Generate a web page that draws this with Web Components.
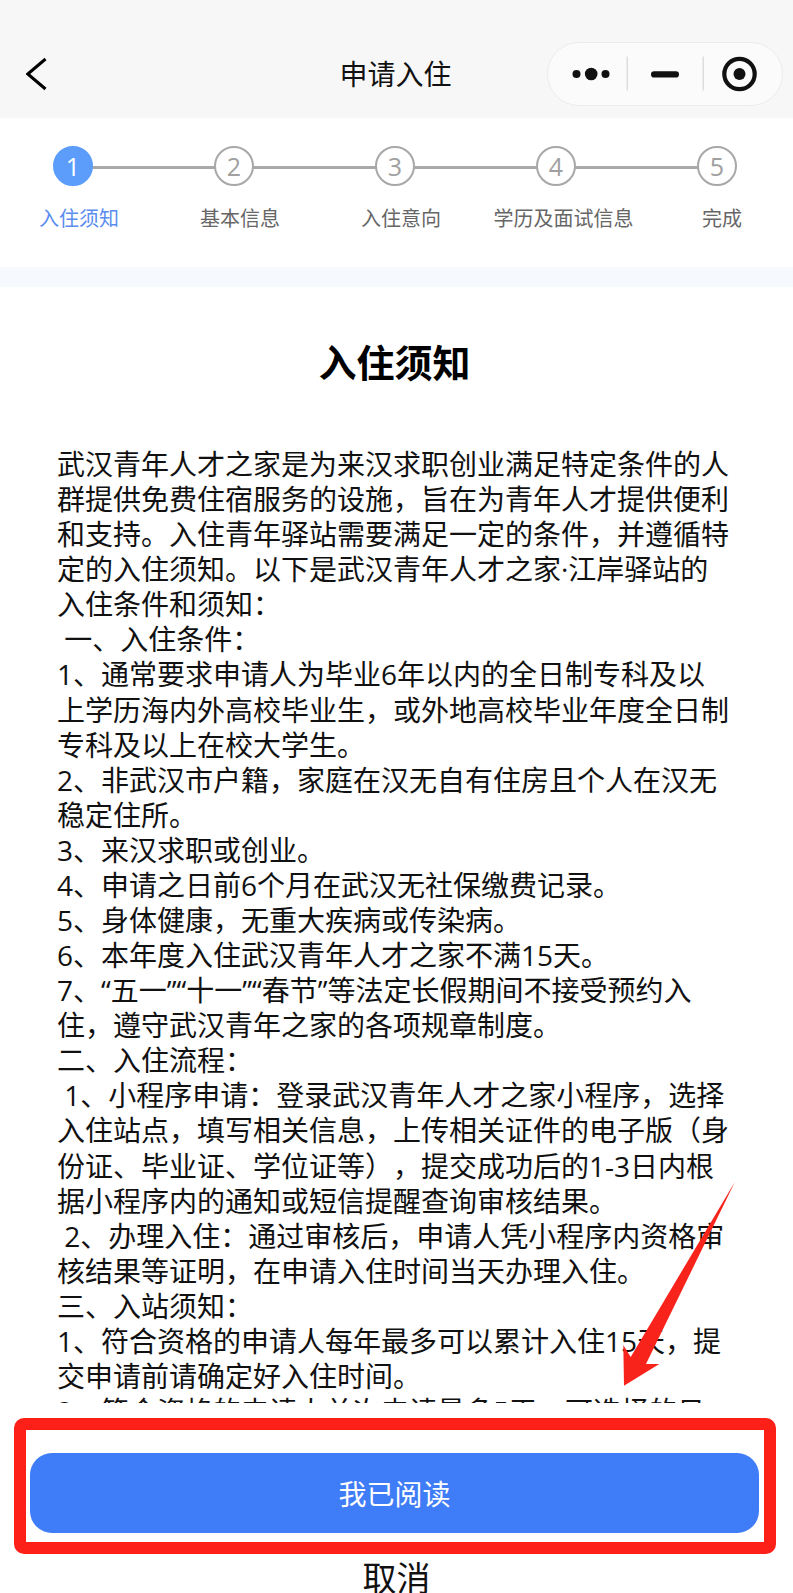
<!DOCTYPE html>
<html><head><meta charset="utf-8"><style>
html,body{margin:0;padding:0;background:#fff;}
body{width:793px;height:1593px;overflow:hidden;font-family:"Open Sans","Noto Sans CJK SC",sans-serif;}
</style></head><body>
<apply-page></apply-page>
<script>
function def(name,html){customElements.define(name,class extends HTMLElement{constructor(){super();this.attachShadow({mode:'open'}).innerHTML=html;}});}
def('nav-bar',`<style>
:host{display:flex;align-items:center;justify-content:center;position:relative;height:118px;background:#f7f7f7;box-sizing:border-box;padding-top:30px;}
.t{font-size:28px;color:#111;line-height:40px;margin-left:-2px}
.b{position:absolute;left:26px;top:57px;width:22px;height:34px}
.c{position:absolute;left:547px;top:42px;width:236px;height:64px;box-sizing:border-box;border:1.5px solid #ececec;border-radius:32px;background:#fbfbfb}
.c svg{display:block}
</style><svg class="b" viewBox="0 0 22 34"><path d="M19.5 2 L1.8 17 L19.5 32" fill="none" stroke="#000" stroke-width="3"/></svg>
<span class="t">申请入住</span>
<div class="c"><svg width="233" height="61" viewBox="0 0 233 61">
<circle cx="28.5" cy="31" r="4" fill="#111"/><circle cx="43.2" cy="31" r="6.3" fill="#111"/><circle cx="57.5" cy="31" r="4" fill="#111"/>
<rect x="78.5" y="13.5" width="1.5" height="34" fill="#ddd"/>
<rect x="103" y="28.3" width="28" height="6.2" rx="3.1" fill="#111"/>
<rect x="154.5" y="13.5" width="1.5" height="34" fill="#ddd"/>
<circle cx="191.5" cy="31" r="15.2" fill="none" stroke="#111" stroke-width="4.2"/><circle cx="191.5" cy="31" r="6" fill="#111"/>
</svg></div>`);
def('step-item',`<style>
:host{display:block;flex:none;width:40px;position:relative;height:40px;z-index:1}
.n{box-sizing:border-box;width:40px;height:40px;border-radius:50%;border:2px solid #a8a8a8;background:#fff;color:#a0a0a0;font-size:25px;display:flex;align-items:center;justify-content:center;line-height:1}
:host([active]) .n{background:#5c9dfb;border-color:#5c9dfb;color:#fff}
.l{position:absolute;top:59px;left:calc(50% + var(--dx,0px));transform:translateX(-50%);white-space:nowrap;font-size:20px;line-height:28px;color:#666}
:host([active]) .l{color:#5b8def}
</style><div class="n"><slot></slot></div><div class="l"><slot name="l"></slot></div>`);
def('step-bar',`<style>
:host{display:flex;justify-content:space-between;position:relative;height:149px;box-sizing:border-box;padding:28px 56px 0 53px;background:#fff}
.line{position:absolute;left:73px;right:76px;top:47.5px;height:3px;background:#a9a9a9}
</style><div class="line"></div><slot></slot>`);
def('notice-body',`<style>
:host{display:block;height:1136px;overflow:hidden;box-sizing:border-box;border-top:20px solid #f6f9fd;background:#fff}
h1{margin:0;padding-top:48px;text-align:center;font-size:38px;line-height:54px;font-weight:700;color:#000;margin-left:-4px}
.p{margin:58px 0 0;padding:0 62px 0 57px;font-size:28px;line-height:35.08px;color:#111;text-spacing-trim:space-all}
</style><h1>入住须知</h1><div class="p"><slot></slot></div>`);
def('action-box',`<style>
:host{display:block;position:relative;margin:15px 17px 0 14px;height:136px;box-sizing:border-box;border:12px solid #fd2018;border-radius:10px;background:#fff;padding:23px 5px 0 4px}
.b{height:80px;border-radius:22px;background:#3f7cf7;color:#fff;font-size:28px;display:flex;align-items:center;justify-content:center}
</style><div class="b"><slot></slot></div>`);
def('red-arrow',`<style>
:host{position:absolute;left:620px;top:1178px;width:120px;height:216px;display:block}
svg{display:block}
</style><svg width="120" height="216" viewBox="0 0 120 216"><path d="M115 3.7 L26 186 L39.3 186 L4 207.7 L3.3 167 L10.7 179 Z" fill="#f8241c"/></svg>`);
def('cancel-link',`<style>
:host{display:block;text-align:center;font-size:34px;line-height:46px;color:#111;padding-top:1px}
</style><slot></slot>`);
def('apply-page',`<style>
:host{display:block;position:relative;width:793px;height:1593px;overflow:hidden;background:#fff}
</style>
<nav-bar></nav-bar>
<step-bar>
<step-item active style="--dx:6px">1<span slot="l">入住须知</span></step-item>
<step-item style="--dx:6px">2<span slot="l">基本信息</span></step-item>
<step-item style="--dx:6px">3<span slot="l">入住意向</span></step-item>
<step-item style="--dx:7.5px">4<span slot="l">学历及面试信息</span></step-item>
<step-item style="--dx:5px">5<span slot="l">完成</span></step-item>
</step-bar>
<notice-body>武汉青年人才之家是为来汉求职创业满足特定条件的人群提供免费住宿服务的设施，旨在为青年人才提供便利和支持。入住青年驿站需要满足一定的条件，并遵循特定的入住须知。以下是武汉青年人才之家·江岸驿站的入住条件和须知：<br>
&nbsp;一、入住条件：<br>
1、通常要求申请人为毕业6年以内的全日制专科及以上学历海内外高校毕业生，或外地高校毕业年度全日制专科及以上在校大学生。<br>
2、非武汉市户籍，家庭在汉无自有住房且个人在汉无稳定住所。<br>
3、来汉求职或创业。<br>
4、申请之日前6个月在武汉无社保缴费记录。<br>
5、身体健康，无重大疾病或传染病。<br>
6、本年度入住武汉青年人才之家不满15天。<br>
7、“五一”“十一”“春节”等法定长假期间不接受预约入住，遵守武汉青年之家的各项规章制度。<br>
二、入住流程：<br>
&nbsp;1、小程序申请：登录武汉青年人才之家小程序，选择入住站点，填写相关信息，上传相关证件的电子版（身份证、毕业证、学位证等），提交成功后的1-3日内根据小程序内的通知或短信提醒查询审核结果。<br>
&nbsp;2、办理入住：通过审核后，申请人凭小程序内资格审核结果等证明，在申请入住时间当天办理入住。<br>
三、入站须知：<br>
1、符合资格的申请人每年最多可以累计入住15天，提交申请前请确定好入住时间。<br>
2、符合资格的申请人单次申请最多5天，可选择的日</notice-body>
<action-box>我已阅读</action-box>
<cancel-link>取消</cancel-link>
<red-arrow></red-arrow>`);
</script></body></html>
